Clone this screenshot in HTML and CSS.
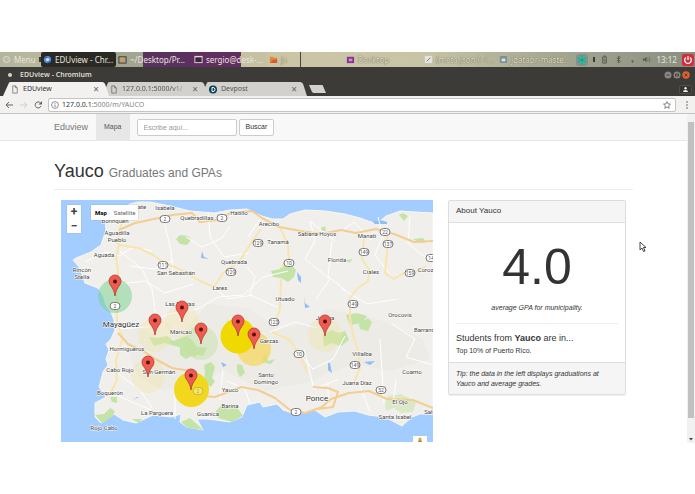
FILE: index.html
```html
<!DOCTYPE html>
<html lang="en">
<head>
<meta charset="utf-8">
<title>EDUview</title>
<link rel="stylesheet" href="styles.css">
</head>
<body>
<div class="desktop">
  <div class="taskbar">
    <span class="task menu"><svg class="ico" viewBox="0 0 10 10"><circle cx="5" cy="5" r="3.5" fill="#bdbbac" stroke="#dedccb"/></svg>Menu <i class="mark"></i></span>
    <span class="task active"><svg class="ico" viewBox="0 0 10 10"><circle cx="5" cy="5" r="4" fill="#5d8ee0"/><circle cx="5" cy="5" r="1.8" fill="#d9e8ff"/><path d="M1.500 3 5 3M8 7 5 9" stroke="#315fba"/></svg>EDUview - Chr...</span>
    <span class="task files"><svg class="ico" viewBox="0 0 10 10"><rect x="1" y="2" width="8" height="7" fill="none" stroke="#37363b"/><path d="M3 3h4v4H3z" fill="#d99b50"/></svg>~/Desktop/Pr...</span>
    <span class="task term"><svg class="ico" viewBox="0 0 10 10"><rect x="1" y="1.500" width="8" height="7" fill="#3a2638" stroke="#ddd"/><path d="M1 2h8" stroke="#eee"/></svg>sergio@desk-...</span>
    <span class="task faint"><svg class="ico" viewBox="0 0 10 10"><path d="M1 2h3l1 1h4v6H1z" fill="#e88442"/><path d="M1 9 5 5h4v4z" fill="#d45f24"/></svg>js</span>
    <span class="task faint line"><svg class="ico" viewBox="0 0 10 10"><rect x="1" y="2" width="8" height="7" fill="#8e2f92"/><rect x="3" y="4" width="4" height="3" fill="#c98bcb"/></svg>Desktop</span>
    <span class="task faint"><svg class="ico" viewBox="0 0 10 10"><rect x="1" y="1" width="8" height="8" fill="#e6e4dc"/><path d="M3 7 7 3" stroke="#777"/></svg>(meta.json (~/...</span>
    <span class="task faint"><svg class="ico" viewBox="0 0 10 10"><rect x="1" y="1" width="8" height="8" rx="1" fill="#7b9299"/><rect x="3" y="4" width="4" height="3" fill="#dce5e8"/></svg>jdatapr-maste...</span>
    <span class="tray">
      <svg class="turtle" viewBox="0 0 12 12"><rect width="12" height="12" rx="3" fill="#83928c"/><path d="M6 1 10 4v4L6 11 2 8V4z" fill="#39b99c"/><path d="M6 1v10M2 4l8 4M10 4 2 8" stroke="#218b76" stroke-width=".6"/></svg>
      <i class="mark"></i>
      <svg class="ico" viewBox="0 0 10 10"><path d="M3 2h4v7H3zM4 1h2" fill="none" stroke="#55564d"/><path d="M5.500 3 4 6h2L5 8" fill="none" stroke="#55564d" stroke-width=".7"/></svg>
      <svg class="ico" viewBox="0 0 10 10"><path d="m3 3 4 4-2 2V1l2 2-4 4" fill="none" stroke="#55564d" stroke-width=".9"/></svg>
      <svg class="ico" viewBox="0 0 10 10"><path d="M1 3q4-3 8 0M2.500 5q2.500-2 5 0" fill="none" stroke="#9b9a89"/><path d="M3.500 6h3L5 9z" fill="#55564d"/></svg>
      <svg class="ico" viewBox="0 0 10 10"><path d="M1 4h2l2-2v6L3 6H1z" fill="#55564d"/><path d="M6 3q1.500 2 0 4M8 2q2 3 0 6" fill="none" stroke="#666658" stroke-width=".8"/></svg>
      <span class="clock">13:12</span>
      <svg class="power" viewBox="0 0 12 12"><rect width="12" height="12" rx="2" fill="#cf303b"/><path d="M4 3.500a3.300 3.300 0 1 0 4 0M6 2v4" fill="none" stroke="#fff" stroke-width="1.300"/></svg>
    </span>
  </div>
  <div class="titlebar">
    <i class="dot"></i><span class="wintitle">EDUview - Chromium</span>
    <svg class="winbtns" viewBox="0 0 26 8"><g fill="#8a877f"><circle cx="4" cy="4" r="3.500"/><circle cx="13" cy="4" r="3.500"/></g><circle cx="22" cy="4" r="3.700" fill="#e9602f"/><path d="M2.500 4h3M11.500 3h3v2h-3zM20.500 2.500l3 3m0-3-3 3" fill="none" stroke="#3c3a36" stroke-width=".9"/></svg>
  </div>
  <div class="tabs">
    <div class="tab current"><svg class="shape" viewBox="0 0 108 14" preserveAspectRatio="none"><path d="M0 14 6 1Q6 0 8 0h93q2 0 3 2l4 12z" fill="#f2f1f0"/></svg><svg class="doc" viewBox="0 0 8 10"><path d="M1.500 1h3l2 2v6h-5zM4.500 1v2h2" fill="none" stroke="#666" stroke-width=".8"/></svg><span>EDUview</span><button aria-label="Close tab">×</button></div>
    <div class="tab"><svg class="shape" viewBox="0 0 108 14" preserveAspectRatio="none"><path d="M0 14 6 1Q6 0 8 0h93q2 0 3 2l4 12z" fill="#d2d1ce"/></svg><svg class="doc" viewBox="0 0 8 10"><path d="M1.500 1h3l2 2v6h-5zM4.500 1v2h2" fill="none" stroke="#666" stroke-width=".8"/></svg><span class="fade">127.0.0.1:5000/v1/</span><button aria-label="Close tab">×</button></div>
    <div class="tab"><svg class="shape" viewBox="0 0 108 14" preserveAspectRatio="none"><path d="M0 14 6 1Q6 0 8 0h93q2 0 3 2l4 12z" fill="#d2d1ce"/></svg><svg class="doc" viewBox="0 0 8 8"><circle cx="4" cy="4" r="4" fill="#063f57"/><path d="M3 2h1q2 0 2 2T4 6H3z" fill="none" stroke="#fff"/></svg><span>Devpost</span><button aria-label="Close tab">×</button></div>
    <svg class="newtab" viewBox="0 0 17 8"><path d="M0 0h13q1 0 1 1l3 7H5Q4 8 3 7z" fill="#d2d1ce"/></svg>
    <svg class="profile" viewBox="0 0 13 9"><rect x=".5" y=".5" width="12" height="8" rx="1" fill="#353430" stroke="#52504b"/><circle cx="6.500" cy="3.200" r="1.200" fill="#eee"/><path d="M4 7q0-2 2.500-2T9 7z" fill="#eee"/></svg>
  </div>
  <div class="toolbar">
    <svg class="arrows" viewBox="0 0 40 10"><g fill="none" stroke-width="1"><path d="M9 5H2m3-3L2 5l3 3" stroke="#626262"/><path d="M16 5h7m-3-3 3 3-3 3" stroke="#cfcecd"/><path d="M36.500 3A3 3 0 1 0 37 6" stroke="#626262"/></g><path d="M38 1v3.500h-3.500z" fill="#626262"/></svg>
    <div class="address">
      <svg class="info" viewBox="0 0 8 8"><circle cx="4" cy="4" r="3.400" fill="none" stroke="#666" stroke-width=".7"/><path d="M4 3.600V6M4 2v.8" stroke="#666" stroke-width=".8"/></svg>
      <span class="url"><b>127.0.0.1</b>:5000/m/YAUCO</span>
      <svg class="star" viewBox="0 0 8 8"><path d="m4 .6 1 2.300 2.500.2-1.900 1.700.6 2.500L4 6 1.800 7.300l.6-2.500L.5 3.100 3 2.900z" fill="none" stroke="#555" stroke-width=".7"/></svg>
    </div>
    <svg class="dots" viewBox="0 0 4 8"><g fill="#5c5c5c"><circle cx="2" cy="1" r=".8"/><circle cx="2" cy="4" r=".8"/><circle cx="2" cy="7" r=".8"/></g></svg>
  </div>
  <div class="viewport">
    <div class="page">
      <nav class="navbar">
        <a class="brand" href="#">Eduview</a>
        <a class="navlink" href="#">Mapa</a>
        <form class="search"><input type="text" aria-label="Buscar municipio" placeholder="Escribe aquí..."><button type="button">Buscar</button></form>
      </nav>
      <main>
        <h1>Yauco <small>Graduates and GPAs</small></h1>
        <div class="columns">
          <div class="map">
            <svg class="canvas" viewBox="61 201 372 242">
              <defs>
                <g id="pin"><path d="M0 0C-.7-5-2-7-4-10Q-6-12-6-15A6 6 0 0 1 6-15Q6-12 4-10C2-7 .7-5 0 0z" fill="#f05b50" stroke="#b43a35" stroke-width=".8"/><circle cy="-14.500" r="2" fill="#55110f"/></g>
                <rect id="badge" x="-5" y="-3.500" width="10" height="7" rx="3.500"/>
              </defs>
              <rect x="61" y="201" width="372" height="242" fill="#a3ccff"/>
              <path class="land" d="M130 205 138 203 150 203 165 206 174 208 190 212 214 214 230 211 247 210 255 214 262 217 272 220 283 220 290 215 305 211 325 212 345 215 360 219 371 223 380 222 386 217 400 212 415 213 433 214V415H420L412 418 402 427 385 418 368 416 355 412 338 413 325 418 315 411 295 415 283 411 277 405 263 408 260 403 247 406 242 418 230 423 208 420 197 420 203 431 187 428 180 423 181 415 171 418 153 416 136 424 123 421 114 415 101 424 95 418 95 404 106 398 99 388 101 381 103 373 108 366 106 360 109 351 106 345 111 340 115 331 114 321 111 313 106 306 103 296 98 289 85 284 83 278 79 268 73 261 76 259 91 253 101 246 106 231 105 221z"/>
              <g class="relief"><path d="M120 326l25 4 15 10 20-5 28-30 40 5 30 20 34-6 15-14 50 10 45 20 8 20-40 12-35-8-50 20-40 8-40-20-35 15-28 4-25-15z"/></g>
              <g class="park">
                <path d="M180 236l8 1 3 4-4 5-7-1-4-5z"/>
                <path d="M271 272l9-2 4-7 8 3 4 5-2 7-6 5-7-4-8-1z"/>
                <path d="M149 338l8 1 10-2 6 5 13-5 6 4 6 9-2 8-9-2-8-8-15-4-10 3z"/>
                <path d="M180 347l7-8 10 9 10 1-4 8-9-2-8 5-6-4z"/>
                <path d="M204 366l7-3 4 5-3 11 3 3-4 6-7-5 1-10z"/>
                <path d="M265 355l3 7 7-2-4 5-9-2z"/>
                <path d="M237 365l5 1 3 8-5 4-3-6zM323 337l8-6 8 3 6-2 4 9-8 6-10-3-7 4z"/>
                <path d="M346 316l11-2 10 3-5 7-12 2zM359 325l9-6 4 4-4 9-8-2z"/>
                <path d="M95 416l9-1 6-6 5 3-3 6-10 6zM110 398h7v6l-5-1zM181 423l9-4 10 9 4 3-16-2zM132 420l10 0-3 4z"/>
                <path d="M216 412l6-6 14 1 7 10-11 6-14-4z"/>
                <path d="M385 405l3-8 13-2 15 8-3 10-12 1-7-5-8 3z" opacity=".5"/>
                <path d="M399 216l4-2 5 3-4 5zM413 240l10-1 3 4-6 1zM321 229l4-2 1 5h-5zM346 261l7-1-4 4z"/>
              </g>
              <path class="water" d="M372 222l5 0 3-1 7 2v2l-12 0zM202 252l2 6 5 2-8-1zM297 273l4 5v6l-3-3zM304 296l1 8 5 4-5 1zM221 363l6 3-4 2zM328 364l2 0 2 10-4-3zM364 363l11-1-5 4zM133 401l4-3h2z"/>
              <g class="minor">
                <path d="M85 263l20-10 14 4 15-9 18 4M120 252l22 18 10 20 4 28M130 267l24 3 20-9M120 285l25-3 20 12 28-9M118 330l30-2 20-13 30-5 20-12 25-2 20-18 25-6M164 222l7 30 2 22M208 213l2 25 14 20 25-4M260 220l-12 18M310 222l5 20-10 18 25 20-14 20M310 222l25 20M332 242l-4 35 18 15M378 218l5 18-8 20 19 25M295 350l18 20 20-10 12-23M223 371l-3 30M175 420v-30M116 373l24 18 12 18M118 397l33 14M304 350l10 40 25-10M380 340l4 65M360 387l10 26M328 410v-25"/>
                <path d="M186 238l16 10 20-9 8-12M247 268l8 10-5 18 27 12M216 290l12 10 25-4M344 230l10-7 17 18M410 218l-2 26 18 15M342 290l25 15 30-5M392 325l23 15-9 18 27 8M270 333l25-10 22 6M250 405l-5-15-18-8M396 380l-3 25"/>
              </g>
              <g class="road">
                <path d="M117 245l4-20 13-9M119 244l-3 15 2 12-1 15 0 38 6 15-7 22 1 20-8 16M119 246l20 3 14 7 14 9 15 6 18 11 14 6M214 288l9-14 16-11 8-13 14-20M280 228l8 18 1 15-8 8M281 280l-1 30-5 14M364 238l-2 22 8 12 2 3M369 274l-1 8-10 7-8 10v20l3 17 5 15 2 18-6 14M387 236v18l-2 20 9 6 10-6 14-2 8-5M272 333l18 8 11 17 6 15"/>
              </g>
              <g class="highway">
                <path d="M118 334l10 11 15 7 14 9 15 8 25 4M193 396l22 2 13-5 13-5 17 3 17 8 15 12 15 3 17-6 9-8 18-6 20-2 18 8 26 1 20 8M313 388l15 1 10 4-5 15-15 2"/>
                <path d="M119 231l16-7 19-4 18-4 20-2 8 9 18-2 12-7 22-2 10 7 17 9 22 4 20 3 20-4 15 3 20-4 18 5 20 8 20-1"/>
              </g>
              <circle cx="115" cy="297" r="17" fill="#7bd494" fill-opacity=".55"/>
              <g fill="#f2e5a4" fill-opacity=".35"><circle cx="182" cy="322" r="17"/><circle cx="155" cy="336" r="17"/><circle cx="148" cy="377" r="17"/><circle cx="325" cy="336" r="17"/></g>
              <circle cx="201" cy="344" r="17" fill="#c5dfa3" fill-opacity=".45"/>
              <circle cx="254" cy="350" r="17" fill="#f6d657" fill-opacity=".7"/>
              <circle cx="238" cy="337" r="17.500" fill="#efd900"/>
              <circle cx="191.500" cy="390.500" r="17.500" fill="#f1d81c"/>
              <g class="shield">
                <g transform="translate(165 220)"><use href="#badge"/><text y="2">2</text></g>
                <g transform="translate(222 219)"><use href="#badge"/><text y="2">2</text></g>
                <g transform="translate(115 307)"><use href="#badge"/><text y="2">2</text></g>
                <g transform="translate(163 266)"><use href="#badge"/><text y="2">111</text></g>
                <g transform="translate(258 244)"><use href="#badge"/><text y="2">129</text></g>
                <g transform="translate(231 273)"><use href="#badge"/><text y="2">129</text></g>
                <g transform="translate(289 264)"><use href="#badge"/><text y="2">10</text></g>
                <g transform="translate(274 323)"><use href="#badge"/><text y="2">123</text></g>
                <g transform="translate(299 355)"><use href="#badge"/><text y="2">10</text></g>
                <g transform="translate(385 233)"><use href="#badge"/><text y="2">22</text></g>
                <g transform="translate(388 245)"><use href="#badge"/><text y="2">137</text></g>
                <g transform="translate(364 253)"><use href="#badge"/><text y="2">149</text></g>
                <g transform="translate(353 305)"><use href="#badge"/><text y="2">149</text></g>
                <g transform="translate(410 274)"><use href="#badge"/><text y="2">159</text></g>
                <g transform="translate(431 259)"><use href="#badge"/><text y="2">14</text></g>
                <g transform="translate(355 366)"><use href="#badge"/><text y="2">149</text></g>
                <g transform="translate(381 391)"><use href="#badge"/><text y="2">52</text></g>
                <g transform="translate(296 413)"><use href="#badge"/><text y="2">2</text></g>
                <g transform="translate(198 392)" opacity=".35"><use href="#badge"/><text y="2">2</text></g>
              </g>
              <g class="place">
                <text x="142" y="210">ate</text><text x="165" y="211">Isabela</text><text x="115" y="224">Borinquen</text>
                <text x="117" y="236">Aguadilla</text><text x="117" y="243">Pueblo</text><text x="104" y="258">Aguada</text>
                <text x="82" y="273">Rincón</text><text x="82" y="280">Stella</text><text x="197" y="221">Quebradillas</text>
                <text x="239" y="216">Hatillo</text><text x="269" y="227">Arecibo</text><text x="278" y="245">Tanamá</text>
                <text x="317" y="237">Sabana Hoyos</text><text x="367" y="239">Manatí</text><text x="337" y="263">Florida</text>
                <text x="371" y="275">Ciales</text><text x="428" y="273">Corozal</text><text x="176" y="276">San Sebastián</text>
                <text x="234" y="265">Quebrada</text><text x="220" y="291">Lares</text><text x="285" y="302">Utuado</text>
                <text x="180" y="307">Las Marías</text><text x="181" y="335">Maricao</text><text x="325" y="321">Jayuya</text>
                <text x="400" y="318">Orocovis</text><text x="431" y="333">Barranquitas</text><text x="269" y="344">Garzas</text>
                <text x="127" y="352">Hormigueros</text><text x="120" y="373">Cabo Rojo</text><text x="159" y="375">San Germán</text>
                <text x="110" y="396">Boquerón</text><text x="157" y="416">La Parguera</text><text x="104" y="431">Rojo Cabo</text>
                <text x="230" y="393">Yauco</text><text x="230" y="409">Barina</text><text x="208" y="417">Guanica</text>
                <text x="266" y="378">Santo</text><text x="266" y="385">Domingo</text><text x="362" y="357">Villalba</text>
                <text x="412" y="375">Coamo</text><text x="357" y="386">Juana Díaz</text><text x="400" y="405">El Ojo</text>
                <text x="395" y="420">Santa Isabel</text><text x="434" y="415">Salinas</text>
                <text class="city" x="121" y="328">Mayagüez</text><text class="city" x="317" y="402">Ponce</text>
              </g>
              <use href="#pin" x="115" y="297"/><use href="#pin" x="182" y="323"/><use href="#pin" x="155" y="336"/><use href="#pin" x="201" y="345"/><use href="#pin" x="238" y="337"/><use href="#pin" x="254" y="350"/><use href="#pin" x="148" y="378"/><use href="#pin" x="191" y="391"/><use href="#pin" x="325" y="337"/>
              <g><rect x="413" y="437" width="14" height="6" fill="#fff"/><circle cx="420" cy="440" r="1.500" fill="#dba72c"/><path d="M418 443q0-2 2-2t2 2z" fill="#b98224"/></g>
            </svg>
            <div class="zoom"><button aria-label="Zoom in">+</button><button aria-label="Zoom out">−</button></div>
            <div class="types"><button class="chosen">Map</button><button>Satellite</button></div>
          </div>
          <section class="panel">
            <h2>About Yauco</h2>
            <div class="body">
              <p class="gpa">4.0</p>
              <p class="caption">average GPA for municipality.</p>
              <hr>
              <h3>Students from <b>Yauco</b> are in...</h3>
              <p>Top 10% of Puerto Rico.</p>
            </div>
            <footer>Tip: the data in the left displays graduations at Yauco and average grades.</footer>
          </section>
        </div>
      </main>
    </div>
    <div class="scroll"><div class="thumb"></div><svg viewBox="0 0 8 8"><path d="M2 3h4L4 5.500z" fill="#444"/></svg></div>
    <svg class="cursor" viewBox="0 0 8 12"><path d="M1 1v8l2-2 1.500 3.500L6 10 4.500 6.500H7z" fill="#fff" stroke="#333" stroke-width=".9"/></svg>
  </div>
</div>
</body>
</html>
```
FILE: styles.css
```css
* { box-sizing: border-box; }
body { margin: 0; background: #fff; color: #333; font: 7px/10px "Liberation Sans", Arial, sans-serif; }
button, input { font: inherit; margin: 0; }
svg { display: block; flex: none; }
h1, h2, h3, p { margin: 0; font-weight: normal; }
.desktop { height: 100vh; padding: 52px 0 51px; display: flex; flex-direction: column; }
.taskbar, .titlebar, .tabs, .toolbar { flex: none; font-family: "Noto Sans", "Open Sans", sans-serif; }

.taskbar { height: 15px; display: grid; grid-template-columns: 41px 75px 76px 75px 33px 122px 75px 75px 1fr; background: linear-gradient(90deg, #b5b59d, #c9c5a5 40%, #c8c5a7 60%, #a5a791 80%, #898e80); color: #e7e4dc; font-size: 8px; white-space: nowrap; }
.task { display: flex; align-items: center; gap: 3px; padding-left: 2px; overflow: hidden; }
.ico { width: 9px; height: 9px; }
.mark { width: 2px; height: 5px; background: #3b3b34; }
.menu { color: #e6e4d4; }
.active { background: #2b2926; border-radius: 2px; }
.files { background: linear-gradient(90deg, #a2a58f 35%, #5b2f60 35%); }
.term { background: linear-gradient(90deg, #632d61 65%, #c6c1a2 65%); }
.faint { color: #e0dcc4; text-shadow: 0 0 1px #77745d, 0 0 1px #77745d; }
.line { border-left: 1px solid #49433b; padding-left: 45px; }
.tray { display: flex; align-items: center; justify-content: space-between; padding: 0 1px 0 4px; }
.turtle, .power { width: 12px; height: 12px; }
.clock { color: #e8e8df; }

.titlebar { height: 15px; display: flex; align-items: center; gap: 7px; padding: 0 5px 0 8px; background: #3d3b37; color: #dfdbd2; }
.dot { width: 4px; height: 4px; margin-right: 1px; border-radius: 50%; background: #d8d4cb; }
.wintitle { flex: 1; font-weight: 600; }
.winbtns { width: 26px; height: 8px; }

.tabs { height: 14px; display: flex; align-items: center; padding-left: 3px; background: #3d3b37; color: #555; }
.tab { position: relative; width: 106px; height: 14px; margin-right: -7px; padding: 0 10px 0 8px; display: flex; align-items: center; gap: 4px; }
.tab > * { position: relative; }
.tab .shape { position: absolute; inset: 0; width: 100%; height: 100%; }
.current { z-index: 1; color: #333; }
.doc { width: 8px; height: 9px; }
.tab span { flex: 1; overflow: hidden; white-space: nowrap; }
.fade { mask-image: linear-gradient(90deg, #000 75%, transparent); }
.tab button { border: 0; padding: 0; background: none; color: #666; font-size: 10px; }
.newtab { width: 17px; height: 8px; margin-left: 9px; }
.profile { width: 13px; height: 9px; margin: 0 3px 0 auto; }

.toolbar { height: 18px; display: flex; align-items: center; gap: 4px; padding: 0 6px 0 4px; background: #f2f1f0; border-bottom: 1px solid #c4c4c4; }
.arrows { width: 40px; height: 10px; }
.address { flex: 1; height: 14px; display: flex; align-items: center; gap: 3px; padding: 0 4px 0 2px; border: 1px solid #c5c4c3; border-radius: 2px; background: #fff; }
.info, .star { width: 8px; height: 8px; }
.url { flex: 1; color: #888; }
.url b { color: #333; font-weight: normal; }
.dots { width: 4px; height: 8px; margin-left: 5px; }

.viewport { position: relative; flex: 1; min-height: 0; display: flex; overflow: hidden; }
.page { flex: 1; min-width: 0; }
.scroll { width: 8px; display: flex; flex-direction: column; background: #f1f1f1; padding-top: 8px; }
.thumb { flex: 1; margin: 0 1px 17px; background: #c1c1c1; }
.scroll svg { width: 8px; height: 8px; }
.cursor { position: absolute; left: 639px; top: 127px; width: 8px; height: 12px; }

.navbar { height: 27px; display: flex; align-items: center; padding-left: 54px; background: #f8f8f8; border-bottom: 1px solid #e7e7e7; }
.navbar a { text-decoration: none; }
.brand { width: 42px; color: #777; font-size: 9px; }
.navlink { align-self: stretch; display: flex; align-items: center; padding: 0 8px; background: #e7e7e7; color: #555; }
.search { display: flex; gap: 2px; margin-left: 7px; }
.search input { width: 100px; height: 17px; padding: 0 6px; border: 1px solid #ccc; border-radius: 2px; background: #fff; color: #555; }
.search input::placeholder { color: #999; }
.search button { height: 17px; padding: 0 6px; border: 1px solid #ccc; border-radius: 2px; background: #fff; color: #333; }

main { padding: 20px 54px 0; }
h1 { padding-bottom: 8px; border-bottom: 1px solid #eee; font-size: 18px; line-height: 20px; }
h1 small { color: #777; font-size: 12px; line-height: 12px; }
.columns { display: grid; grid-template-columns: 372fr 178fr; gap: 15px; align-items: start; padding: 10px 7px 0; }
.map { position: relative; }
.canvas { width: 100%; height: auto; }
.land { fill: #f1efeb; stroke: #f8f7f3; stroke-width: 1; }
.relief { fill: #e8e8e2; opacity: .5; }
.park { fill: #c4e3a6; }
.water { fill: #8dbef5; }
.minor { fill: none; stroke: #fff; stroke-width: 1; stroke-linejoin: round; }
.road { fill: none; stroke: #f8e5ae; stroke-width: 2; stroke-linejoin: round; }
.highway { fill: none; stroke: #f4cd91; stroke-width: 2; stroke-linejoin: round; }
.shield { fill: #fff; stroke: #777; stroke-width: 1; }
.shield text { fill: #555; stroke: none; font: 5px Roboto, sans-serif; text-anchor: middle; }
.place { fill: #444; stroke: #fff; stroke-width: 1; paint-order: stroke; font: 6px Roboto, sans-serif; text-anchor: middle; }
.city { fill: #333; font-size: 8px; }
.map button { border: 0; padding: 0; background: #fff; font-family: Roboto, sans-serif; color: #666; }
.zoom { position: absolute; left: 6px; top: 5px; width: 14px; display: flex; flex-direction: column; box-shadow: 0 0 1px #999; }
.map .zoom button { height: 14px; color: #444; font-size: 12px; font-weight: bold; }
.types { position: absolute; left: 30px; top: 5px; height: 15px; display: flex; box-shadow: 0 0 1px #999; }
.map .types button { padding: 0 3px 0 4px; font-size: 6px; }
.map .types .chosen { color: #000; font-weight: bold; }

.panel { border: 1px solid #ddd; border-radius: 2px; box-shadow: 0 1px 1px #0001; }
.panel h2 { padding: 5px 7px 6px; background: #f5f5f5; border-bottom: 1px solid #ddd; font-size: 8px; }
.body { padding: 16px 7px 6px; }
.gpa { font-size: 50px; line-height: 56px; text-align: center; }
.caption { margin-top: 8px; text-align: center; font-style: italic; }
hr { margin: 10px 0 8px; border: 0; border-top: 1px solid #eee; }
.panel h3 { font-size: 9px; line-height: 12px; margin-bottom: 2px; }
.panel footer { padding: 6px 7px 5px; background: #f5f5f5; border-top: 1px solid #ddd; font-style: italic; }
```
